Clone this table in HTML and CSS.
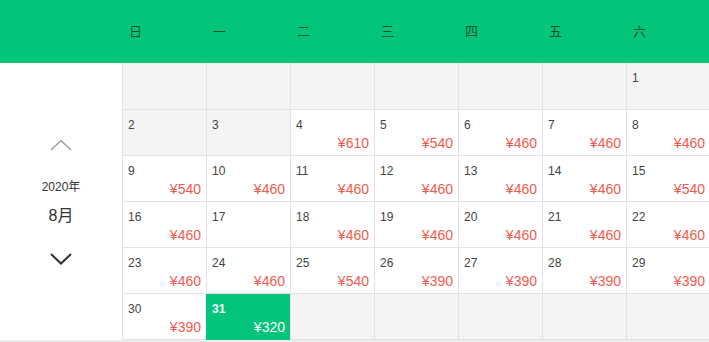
FILE: index.html
```html
<!DOCTYPE html>
<html lang="zh">
<head>
<meta charset="utf-8">
<link rel="stylesheet" href="styles.css">
</head>
<body>
<div class="cal">
  <div class="head">
    <div class="head-spacer"></div>
    <div class="wd">日</div><div class="wd">一</div><div class="wd">二</div><div class="wd">三</div><div class="wd">四</div><div class="wd">五</div><div class="wd">六</div>
  </div>
  <div class="main">
    <div class="side">
      <svg class="chev up" width="22" height="12" viewBox="0 0 22 12"><path d="M1 11 L11 1.5 L21 11" fill="none" stroke="#a0a0a0" stroke-width="1.6"/></svg>
      <div class="year">2020年</div>
      <div class="month">8月</div>
      <svg class="chev down" width="22" height="12" viewBox="0 0 22 12"><path d="M1 1 L11 10.5 L21 1" fill="none" stroke="#333" stroke-width="2"/></svg>
    </div>
    <div class="grid">
      <div class="cell off"></div><div class="cell off"></div><div class="cell off"></div><div class="cell off"></div><div class="cell off"></div><div class="cell off"></div>
      <div class="cell off"><span class="d">1</span></div>
      <div class="cell off"><span class="d">2</span></div>
      <div class="cell off"><span class="d">3</span></div>
      <div class="cell"><span class="d">4</span><span class="p">¥610</span></div>
      <div class="cell"><span class="d">5</span><span class="p">¥540</span></div>
      <div class="cell"><span class="d">6</span><span class="p">¥460</span></div>
      <div class="cell"><span class="d">7</span><span class="p">¥460</span></div>
      <div class="cell"><span class="d">8</span><span class="p">¥460</span></div>
      <div class="cell"><span class="d">9</span><span class="p">¥540</span></div>
      <div class="cell"><span class="d">10</span><span class="p">¥460</span></div>
      <div class="cell"><span class="d">11</span><span class="p">¥460</span></div>
      <div class="cell"><span class="d">12</span><span class="p">¥460</span></div>
      <div class="cell"><span class="d">13</span><span class="p">¥460</span></div>
      <div class="cell"><span class="d">14</span><span class="p">¥460</span></div>
      <div class="cell"><span class="d">15</span><span class="p">¥540</span></div>
      <div class="cell"><span class="d">16</span><span class="p">¥460</span></div>
      <div class="cell"><span class="d">17</span></div>
      <div class="cell"><span class="d">18</span><span class="p">¥460</span></div>
      <div class="cell"><span class="d">19</span><span class="p">¥460</span></div>
      <div class="cell"><span class="d">20</span><span class="p">¥460</span></div>
      <div class="cell"><span class="d">21</span><span class="p">¥460</span></div>
      <div class="cell"><span class="d">22</span><span class="p">¥460</span></div>
      <div class="cell"><span class="d">23</span><span class="p">¥460</span></div>
      <div class="cell"><span class="d">24</span><span class="p">¥460</span></div>
      <div class="cell"><span class="d">25</span><span class="p">¥540</span></div>
      <div class="cell"><span class="d">26</span><span class="p">¥390</span></div>
      <div class="cell"><span class="d">27</span><span class="p">¥390</span></div>
      <div class="cell"><span class="d">28</span><span class="p">¥390</span></div>
      <div class="cell"><span class="d">29</span><span class="p">¥390</span></div>
      <div class="cell"><span class="d">30</span><span class="p">¥390</span></div>
      <div class="cell sel"><span class="d">31</span><span class="p">¥320</span></div>
      <div class="cell off"></div><div class="cell off"></div><div class="cell off"></div><div class="cell off"></div><div class="cell off"></div>
    </div>
  </div>
</div>
</body>
</html>
```
FILE: styles.css
```css
* { box-sizing: border-box; }
html, body { margin: 0; padding: 0; }
body {
  background: #ececec;
  font-family: "Liberation Sans", "Noto Sans CJK SC", sans-serif;
  color: #333;
  overflow: hidden;
}
.cal { width: 709px; background: #fff; }
.head {
  display: grid;
  grid-template-columns: 122px repeat(7, 84px);
  height: 63px;
  background: #02c47b;
}
.wd {
  padding-left: 7px;
  font-size: 13px;
  line-height: 63px;
  color: rgba(0, 40, 20, 0.75);
}
.main { display: flex; }
.side {
  width: 122px;
  flex: none;
  display: flex;
  flex-direction: column;
  align-items: center;
  padding-top: 76px;
}
.chev { display: block; }
.year { margin-top: 28px; font-size: 12px; line-height: 16px; }
.month { margin-top: 11px; font-size: 16px; line-height: 20px; }
.chev.down { margin-top: 27px; }
.grid {
  display: grid;
  grid-template-columns: repeat(7, 84px);
  grid-template-rows: 47px repeat(5, 46px);
  flex: none;
}
.cell {
  border-left: 1px solid #e2e2e2;
  border-bottom: 1px solid #e2e2e2;
  padding: 8px 5px 0 5px;
  display: flex;
  flex-direction: column;
  background: #fff;
}
.cell.off { background: #f4f4f4; }
.d { font-size: 12px; line-height: 14px; color: #444; }
.p {
  font-size: 14px;
  line-height: 16px;
  color: #f25a50;
  text-align: right;
  margin-top: 3px;
}
.cell.sel { background: #02c47b; border-color: #02c47b; }
.cell.sel .d, .cell.sel .p { color: #fff; }
.cell.sel .d { font-weight: bold; }
```
